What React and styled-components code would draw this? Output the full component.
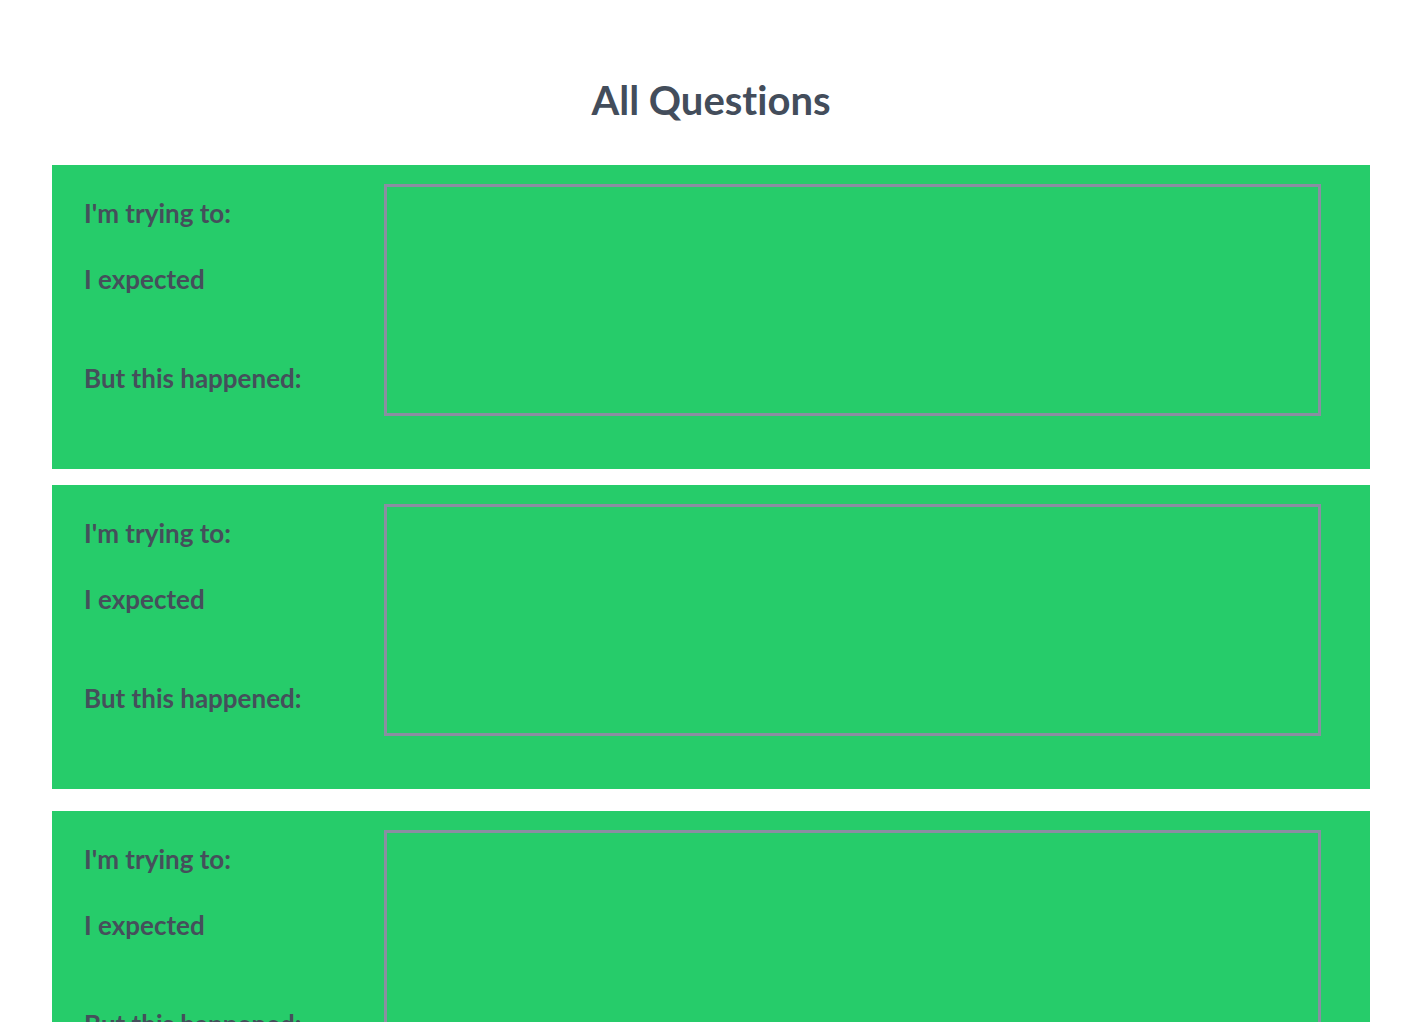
import React from 'react'
import styled, { createGlobalStyle } from 'styled-components'

const GlobalStyle = createGlobalStyle`
  body {
    margin: 0;
    background: #ffffff;
    font-family: Lato, "Open Sans", sans-serif;
    font-variant-ligatures: none;
  }
`

const Page = styled.div`
  width: 100%;
  display: flex;
  flex-direction: column;
  align-items: center;
  padding: 0 58px 0 52px;
  box-sizing: border-box;
`

const Title = styled.h1`
  margin: 75px 0 40px;
  font-size: 40px;
  font-weight: 700;
  line-height: 50px;
  color: #434d5b;
`

const Card = styled.div`
  width: 100%;
  display: flex;
  background: #26cc6a;
  padding: 19px 49px 53px 32px;
  box-sizing: border-box;
  margin-bottom: ${p => p.gap}px;
`

const Labels = styled.div`
  width: 300px;
  display: flex;
  flex-direction: column;
  padding-top: 14px;
`

const Label = styled.div`
  font-size: 26px;
  font-weight: 700;
  line-height: 30px;
  color: #454f5b;
  margin-bottom: ${p => p.space}px;
`

const AnswerBox = styled.div`
  flex: 1;
  height: 232px;
  border: 3px solid #898fa2;
  box-sizing: border-box;
`

const gaps = [16, 22, 0]

export default () => (
  <>
    <GlobalStyle />
    <Page>
      <Title>All Questions</Title>
      {gaps.map((gap, i) => (
        <Card key={i} gap={gap}>
          <Labels>
            <Label space={36}>I'm trying to:</Label>
            <Label space={69}>I expected</Label>
            <Label space={0}>But this happened:</Label>
          </Labels>
          <AnswerBox />
        </Card>
      ))}
    </Page>
  </>
)
